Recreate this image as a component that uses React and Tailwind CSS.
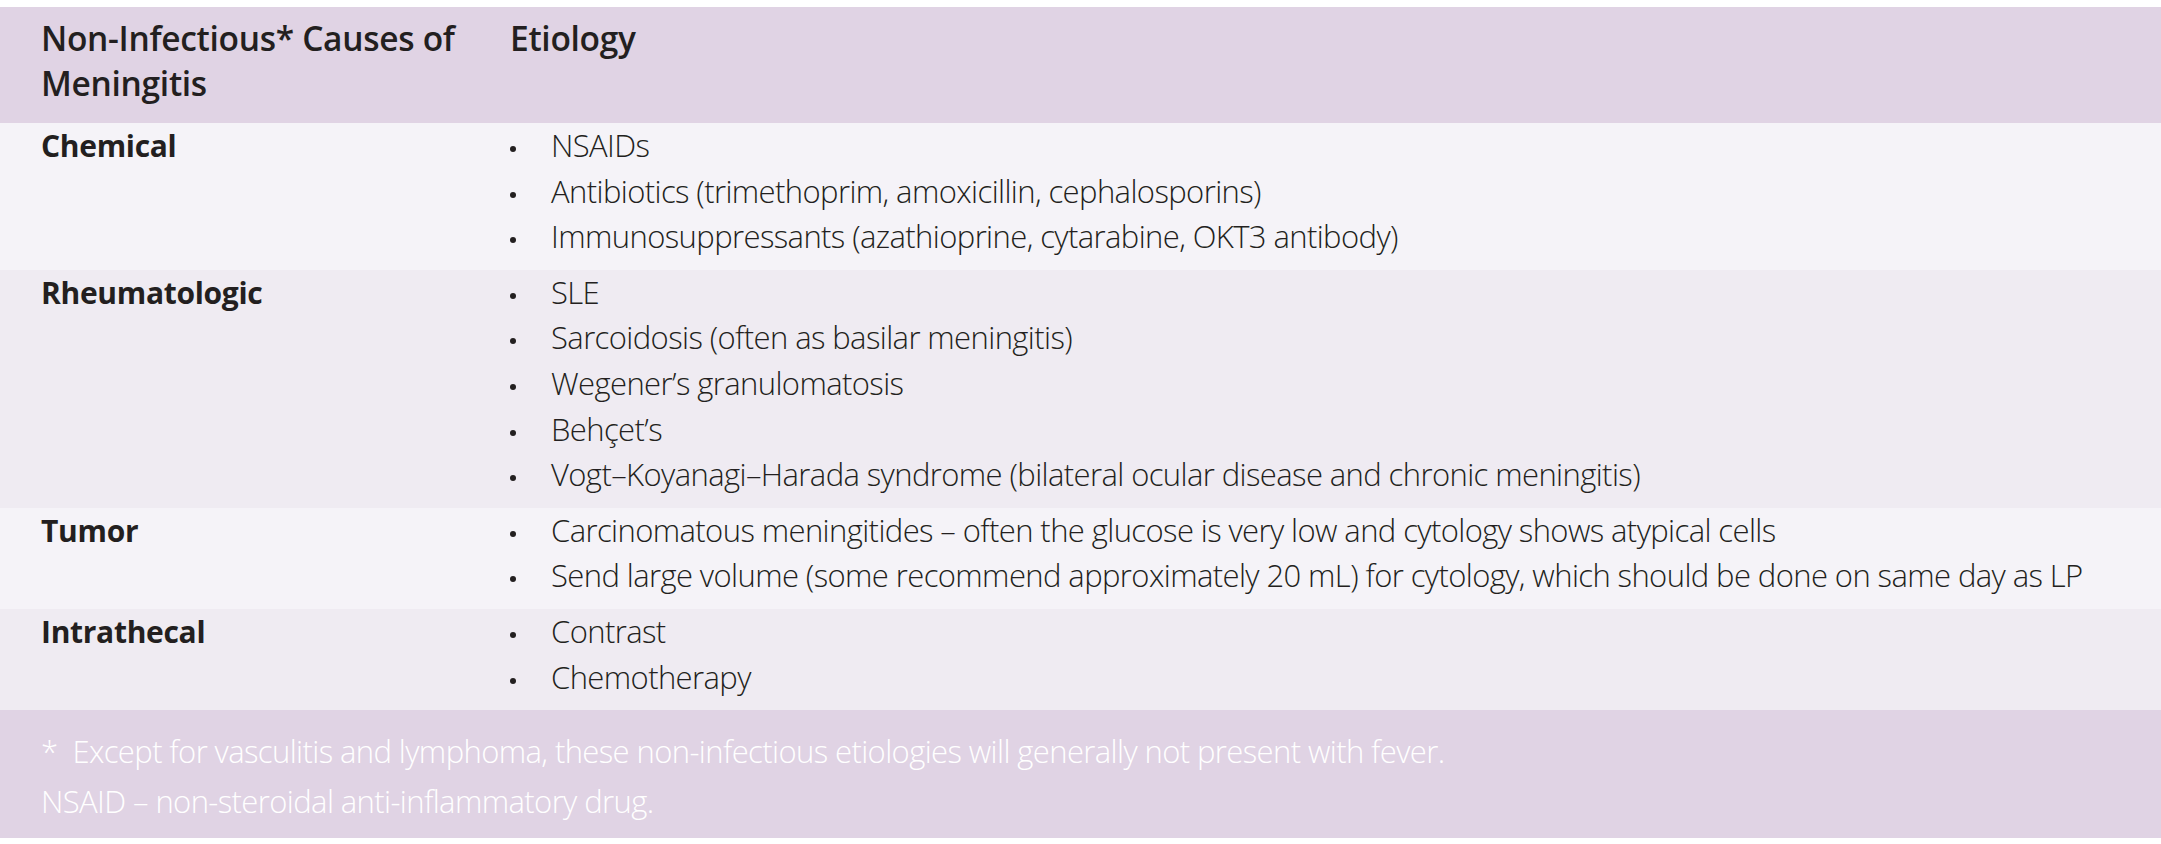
import React from "react";

const rows = [
  {
    label: "Chemical",
    bg: "bg-[#f5f3f8]",
    items: [
      "NSAIDs",
      "Antibiotics (trimethoprim, amoxicillin, cephalosporins)",
      "Immunosuppressants (azathioprine, cytarabine, OKT3 antibody)",
    ],
  },
  {
    label: "Rheumatologic",
    bg: "bg-[#efebf2]",
    items: [
      "SLE",
      "Sarcoidosis (often as basilar meningitis)",
      "Wegener\u2019s granulomatosis",
      "Beh\u00e7et\u2019s",
      "Vogt\u2013Koyanagi\u2013Harada syndrome (bilateral ocular disease and chronic meningitis)",
    ],
  },
  {
    label: "Tumor",
    bg: "bg-[#f5f3f8]",
    items: [
      "Carcinomatous meningitides \u2013 often the glucose is very low and cytology shows atypical cells",
      "Send large volume (some recommend approximately 20 mL) for cytology, which should be done on same day as LP",
    ],
  },
  {
    label: "Intrathecal",
    bg: "bg-[#efebf2]",
    items: ["Contrast", "Chemotherapy"],
  },
];

export default function App() {
  return (
    <div className="w-[2161px] h-[844px] bg-white pt-[7px] text-[#231f20] font-['Open_Sans',sans-serif]">
      <div className="grid grid-cols-[510px_1fr] bg-[#e0d3e4] pt-[9px] pb-[17px] text-[33.5px] leading-[45px] font-semibold tracking-[-0.3px]">
        <div className="pl-[41px] pr-4">Non-Infectious* Causes of Meningitis</div>
        <div>Etiology</div>
      </div>
      {rows.map((r) => (
        <div key={r.label} className={`grid grid-cols-[510px_1fr] ${r.bg} pt-0 pb-[10px]`}>
          <div className="pl-[41px] text-[30px] leading-[45.6px] font-bold tracking-[-0.3px]">{r.label}</div>
          <ul className="flex flex-col">
            {r.items.map((it) => (
              <li key={it} className="flex text-[31px] leading-[45.6px] font-light tracking-[-0.6px] whitespace-nowrap">
                <span className="w-[41px] shrink-0 flex">
                  <span className="mt-[23px] w-[6px] h-[6px] rounded-full bg-[#231f20]" />
                </span>
                <span>{it}</span>
              </li>
            ))}
          </ul>
        </div>
      ))}
      <div className="bg-[#e0d3e4] pl-[41px] pt-[16px] pb-[12px] text-white text-[31px] leading-[50px] font-light tracking-[-0.6px]">
        <div>*&nbsp; Except for vasculitis and lymphoma, these non-infectious etiologies will generally not present with fever.</div>
        <div>NSAID – non-steroidal anti-inflammatory drug.</div>
      </div>
    </div>
  );
}
